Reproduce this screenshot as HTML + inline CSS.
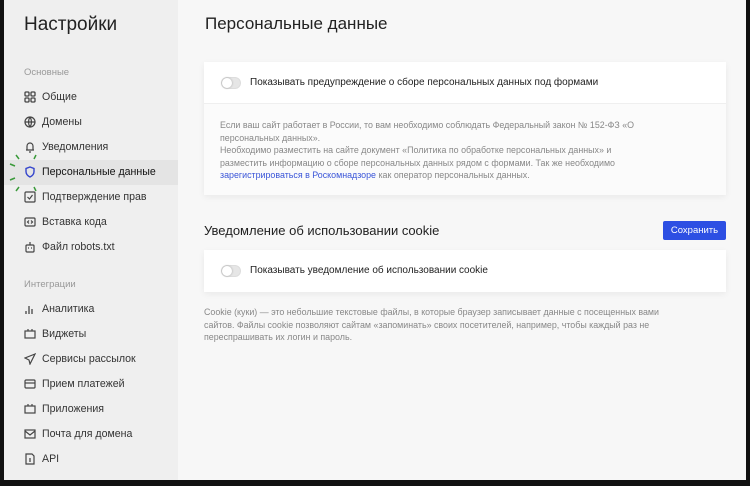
<!DOCTYPE html><html><head><meta charset="utf-8"><style>
*{margin:0;padding:0;box-sizing:border-box}
body{width:750px;height:486px;background:#111;font-family:"Liberation Sans",sans-serif;position:relative;overflow:hidden}
.sb{position:absolute;left:4px;top:0;width:174px;height:480px;background:#efefef}
.main{position:absolute;left:178px;top:0;width:568px;height:480px;background:#f7f7f7}
.a{position:absolute;white-space:nowrap}
.it{position:absolute;left:24px;font-size:10.6px;color:#333;display:flex;align-items:center;gap:6px}
.ic{width:12px;height:12px;display:inline-block}
.sec{font-size:9.5px;color:#999}
.card{position:absolute;left:204px;width:522px;background:#fff;box-shadow:0 2px 6px rgba(0,0,0,.06)}
.tg{position:absolute;left:17px;width:20px;height:12px;border-radius:6px;background:#e6e6e6;border:1px solid #ddd}
.tg:after{content:"";position:absolute;left:0;top:0;width:10px;height:10px;border-radius:5px;background:#fff;box-shadow:0 0 2px rgba(0,0,0,.3)}
.gt{font-size:8.9px;color:#888;line-height:12.5px}
</style></head><body>
<div class="sb"></div>
<div class="main"></div>
<div class="a" style="left:24px;top:14px;font-size:19px;color:#222">Настройки</div>
<div class="a sec" style="left:24px;top:67px">Основные</div>
<div style="position:absolute;left:4px;top:160px;width:174px;height:25px;background:#e4e4e4"></div>
<div class="it" style="top:91px"><svg class="ic" viewBox="0 0 12 12" fill="none" stroke="#444" stroke-width="1.3"><rect x="1" y="1" width="4" height="4" rx="1"/><rect x="7" y="1" width="4" height="4" rx="1"/><rect x="1" y="7" width="4" height="4" rx="1"/><rect x="7" y="7" width="4" height="4" rx="1"/></svg>Общие</div>
<div class="it" style="top:116px"><svg class="ic" viewBox="0 0 12 12" fill="none" stroke="#444" stroke-width="1.2"><circle cx="6" cy="6" r="5"/><path d="M1 6h10M6 1c-2 3-2 7 0 10M6 1c2 3 2 7 0 10"/></svg>Домены</div>
<div class="it" style="top:141px"><svg class="ic" viewBox="0 0 12 12" fill="none" stroke="#444" stroke-width="1.2"><path d="M3 9V5a3 3 0 016 0v4H2h8M5 11h2"/></svg>Уведомления</div>
<div class="it" style="top:166px;color:#111"><svg class="ic" viewBox="0 0 12 12" fill="none" stroke="#3344cc" stroke-width="1.4"><path d="M6 1l4 1.5v3c0 3-2 4.5-4 5.5-2-1-4-2.5-4-5.5v-3z"/></svg>Персональные данные</div>
<svg style="position:absolute;left:6px;top:150px" width="46" height="46" viewBox="0 0 46 46" stroke="#3a9a3a" stroke-width="1.5"><path d="M4 14l5 2M10 5l3 4M4 30l5-2M10 41l3-4M30 5l-2 4M30 41l-2-4"/></svg>
<div class="it" style="top:191px"><svg class="ic" viewBox="0 0 12 12" fill="none" stroke="#444" stroke-width="1.2"><rect x="1" y="1" width="10" height="10" rx="1"/><path d="M3.5 6l2 2 3-4"/></svg>Подтверждение прав</div>
<div class="it" style="top:216px"><svg class="ic" viewBox="0 0 12 12" fill="none" stroke="#444" stroke-width="1.2"><rect x="1" y="2" width="10" height="8" rx="1"/><path d="M5 4.5L3.5 6 5 7.5M7 4.5L8.5 6 7 7.5"/></svg>Вставка кода</div>
<div class="it" style="top:241px"><svg class="ic" viewBox="0 0 12 12" fill="none" stroke="#444" stroke-width="1.2"><rect x="2" y="4" width="8" height="7" rx="1"/><path d="M6 1v3M4 7h1M7 7h1"/></svg>Файл robots.txt</div>
<div class="a sec" style="left:24px;top:279px">Интеграции</div>
<div class="it" style="top:303px"><svg class="ic" viewBox="0 0 12 12" stroke="#444" stroke-width="1.3"><path d="M2 11V8M5 11V3M8 11V6"/></svg>Аналитика</div>
<div class="it" style="top:328px"><svg class="ic" viewBox="0 0 12 12" fill="none" stroke="#444" stroke-width="1.2"><rect x="1" y="3" width="10" height="7"/><path d="M4 1v2M8 1v2"/></svg>Виджеты</div>
<div class="it" style="top:353px"><svg class="ic" viewBox="0 0 12 12" fill="none" stroke="#444" stroke-width="1.2"><path d="M11 1L1 5l4 2 1 4z"/></svg>Сервисы рассылок</div>
<div class="it" style="top:378px"><svg class="ic" viewBox="0 0 12 12" fill="none" stroke="#444" stroke-width="1.2"><rect x="1" y="2" width="10" height="8" rx="1"/><path d="M1 5h10"/></svg>Прием платежей</div>
<div class="it" style="top:403px"><svg class="ic" viewBox="0 0 12 12" fill="none" stroke="#444" stroke-width="1.2"><rect x="1" y="3" width="10" height="7"/><path d="M4 1v2M8 1v2"/></svg>Приложения</div>
<div class="it" style="top:428px"><svg class="ic" viewBox="0 0 12 12" fill="none" stroke="#444" stroke-width="1.2"><rect x="1" y="2" width="10" height="8"/><path d="M1 3l5 4 5-4"/></svg>Почта для домена</div>
<div class="it" style="top:453px"><svg class="ic" viewBox="0 0 12 12" fill="none" stroke="#444" stroke-width="1.2"><path d="M2 1h6l2 2v8H2z"/><path d="M5 6h2M5 8h2"/></svg>API</div>

<div class="a" style="left:205px;top:14px;font-size:17px;color:#222">Персональные данные</div>
<div class="card" style="top:62px;height:133px;background:#fbfbfb"></div>
<div class="card" style="top:62px;height:42px;box-shadow:none;border-bottom:1px solid #efefef"><div class="tg" style="top:15px"></div><div class="a" style="left:46px;top:15px;font-size:10px;color:#222">Показывать предупреждение о сборе персональных данных под формами</div></div>
<div class="a gt" style="left:220px;top:119px">Если ваш сайт работает в России, то вам необходимо соблюдать Федеральный закон № 152-ФЗ «О<br>персональных данных».<br>Необходимо разместить на сайте документ «Политика по обработке персональных данных» и<br>разместить информацию о сборе персональных данных рядом с формами. Так же необходимо<br><span style="color:#3a55d8">зарегистрироваться в Роскомнадзоре</span> как оператор персональных данных.</div>
<div class="a" style="left:204px;top:223px;font-size:13px;color:#222">Уведомление об использовании cookie</div>
<div class="a" style="left:663px;top:221px;width:63px;height:19px;background:#2d4fe3;border-radius:2px;color:#fff;font-size:9.5px;text-align:center;line-height:19px">Сохранить</div>
<div class="card" style="top:250px;height:42px"><div class="tg" style="top:15px"></div><div class="a" style="left:46px;top:15px;font-size:10px;color:#222">Показывать уведомление об использовании cookie</div></div>
<div class="a gt" style="left:204px;top:306px">Cookie (куки) — это небольшие текстовые файлы, в которые браузер записывает данные с посещенных вами<br>сайтов. Файлы cookie позволяют сайтам «запоминать» своих посетителей, например, чтобы каждый раз не<br>переспрашивать их логин и пароль.</div>
</body></html>
